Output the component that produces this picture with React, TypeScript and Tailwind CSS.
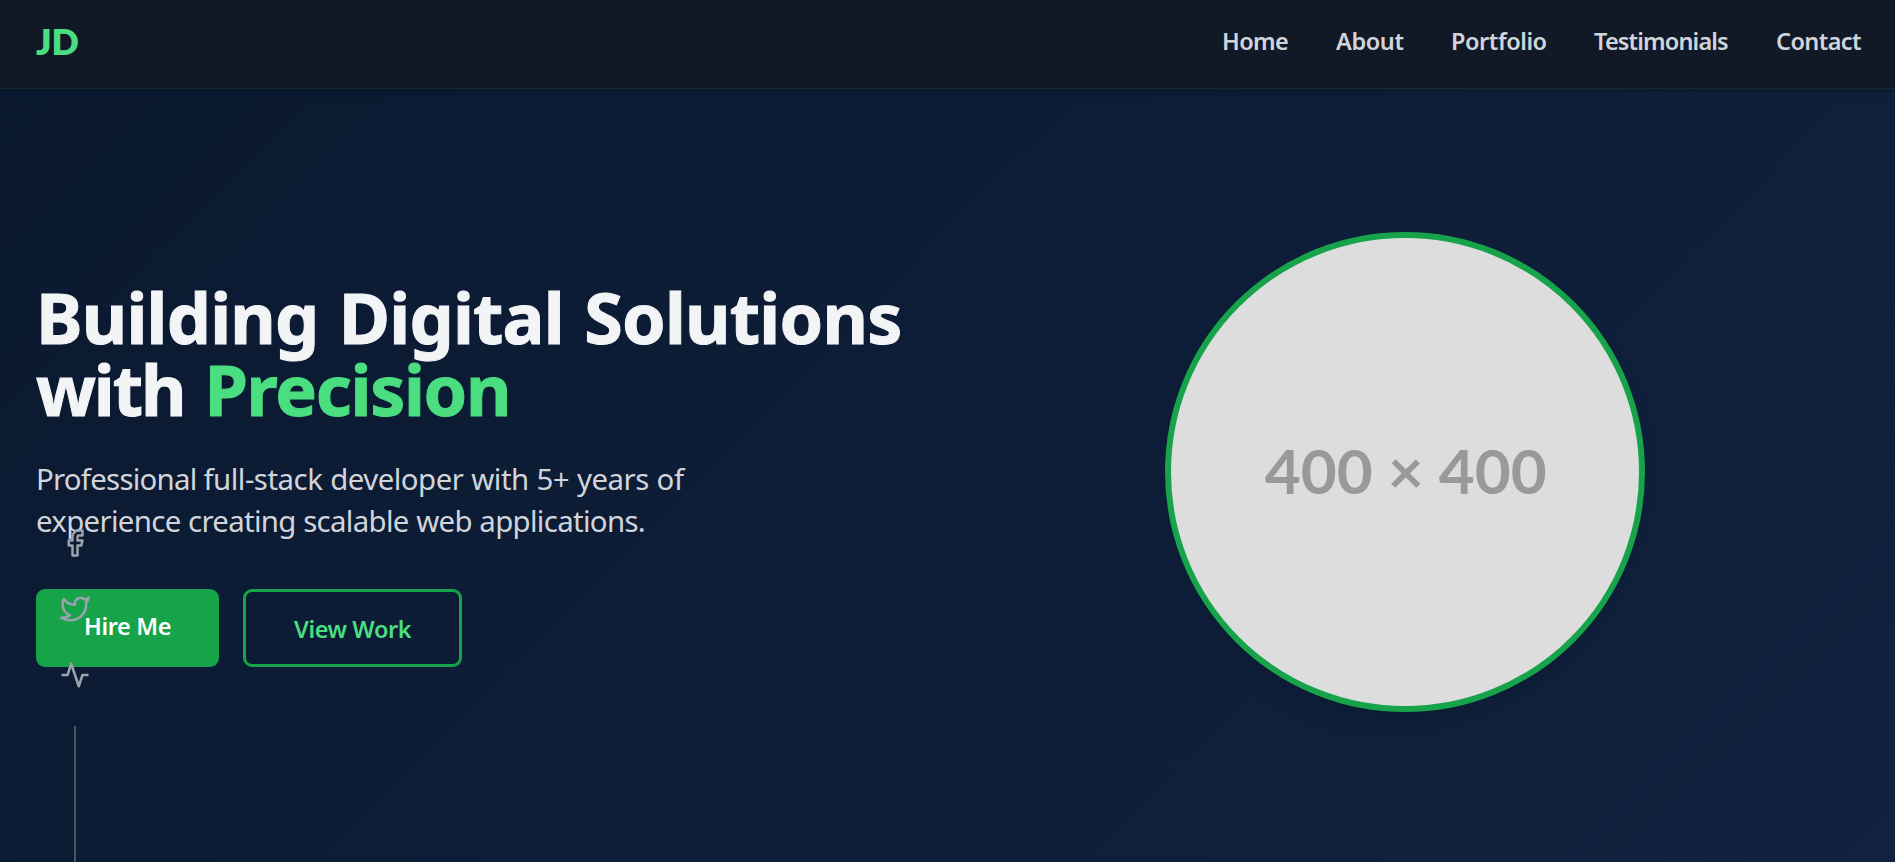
import React from "react";

const links = [
  { label: "Home", className: "w-[66px] tracking-[-0.6px]" },
  { label: "About", className: "w-[67px] tracking-[-0.4px]" },
  { label: "Portfolio", className: "w-[95px] tracking-[-0.45px]" },
  { label: "Testimonials", className: "w-[134px] tracking-[-0.84px]" },
  { label: "Contact", className: "w-[86px] tracking-[-0.6px]" },
];

function StrokeIcon({ children }: { children: React.ReactNode }) {
  return (
    <svg
      width="30"
      height="30"
      viewBox="0 0 24 24"
      fill="none"
      stroke="currentColor"
      strokeWidth="2"
      strokeLinecap="round"
      strokeLinejoin="round"
    >
      {children}
    </svg>
  );
}

function Header() {
  return (
    <header className="flex h-[89px] items-start justify-between border-b border-[#16a34a]/15 bg-[#111927] pt-5 pr-[33px] pl-9 shadow-md">
      <a href="#" className="font-['Lato',sans-serif] text-[36px] leading-[42px] font-extrabold tracking-[-0.2px] text-[#4ade80]">
        JD
      </a>
      <nav className="mt-[3px] flex gap-12 text-[23.5px] leading-9 font-semibold text-[#d1d5db]">
        {links.map((link) => (
          <a key={link.label} href="#" className={`whitespace-nowrap ${link.className}`}>
            {link.label}
          </a>
        ))}
      </nav>
    </header>
  );
}

function SocialRail() {
  return (
    <aside className="absolute top-[528px] bottom-0 left-[60px] flex w-[30px] flex-col items-center gap-9 text-[#9ca3af]">
      <StrokeIcon>
        <path d="M18 2h-3a5 5 0 0 0-5 5v3H7v4h3v8h4v-8h3l1-4h-4V7a1 1 0 0 1 1-1h3z" />
      </StrokeIcon>
      <StrokeIcon>
        <path d="M23 3a10.9 10.9 0 0 1-3.14 1.53 4.48 4.48 0 0 0-7.86 3v1A10.66 10.66 0 0 1 3 4s-4 9 5 13a11.64 11.64 0 0 1-7 2c9 5 20 0 20-11.5a4.5 4.5 0 0 0-.08-.83A7.72 7.72 0 0 0 23 3z" />
      </StrokeIcon>
      <StrokeIcon>
        <path d="M22 12h-4l-3 9L9 3l-3 9H2" />
      </StrokeIcon>
      <div className="w-0.5 flex-1 bg-[#4b5563]" />
    </aside>
  );
}

export default function App() {
  return (
    <div className="relative flex h-[862px] flex-col overflow-hidden bg-linear-[135deg] from-[#0a192f] to-[#112240] font-['Noto_Sans','Open_Sans',sans-serif]">
      <Header />
      <main className="grid flex-1 grid-cols-2 items-center pr-[34px] pb-[7px] pl-9">
        <section>
          <h1 className="mb-8 pt-1 text-[70px] leading-[72px] font-bold whitespace-nowrap text-[#f3f4f6] [-webkit-text-stroke:1px_currentColor]">
            <span className="block tracking-[-0.79px] [word-spacing:3px]">Building Digital Solutions</span>
            <span className="block">
              <span className="tracking-[-2.1px]">with </span>
              <span className="ml-1 tracking-[-1.3px] text-[#4ade80]">Precision</span>
            </span>
          </h1>
          <p className="mb-[47px] pt-px text-[29.4px] leading-[42px] whitespace-nowrap text-[#d1d5db]">
            <span className="block">
              <span className="tracking-[-0.75px]">Professional </span>
              <span className="tracking-[-0.5px] [word-spacing:0.7px]">full-stack developer with 5+ years of</span>
            </span>
            <span className="block tracking-[-0.68px] [word-spacing:0.5px]">experience creating scalable web applications.</span>
          </p>
          <div className="flex gap-6 text-[23.5px] leading-9 font-semibold whitespace-nowrap">
            <a href="#" className="h-[78px] w-[183px] rounded-[9px] bg-[#16a34a] pt-[19px] pl-12 tracking-[-0.35px] text-white">
              Hire Me
            </a>
            <a href="#" className="h-[78px] w-[219px] rounded-[9px] border-3 border-[#16a34a] pt-[19px] pl-12 tracking-[-0.4px] text-[#4ade80]">
              View Work
            </a>
          </div>
        </section>
        <div className="flex size-[480px] items-center justify-center justify-self-center rounded-full border-6 border-[#16a34a] bg-[#dddddd] pb-[5px] pl-0.5 font-['Lato',sans-serif] text-[62px] leading-none font-bold text-[#999999] shadow-[0_15px_23px_-5px_rgba(0,0,0,0.1),0_6px_9px_-6px_rgba(0,0,0,0.1)]">
          400 × 400
        </div>
      </main>
      <SocialRail />
    </div>
  );
}
